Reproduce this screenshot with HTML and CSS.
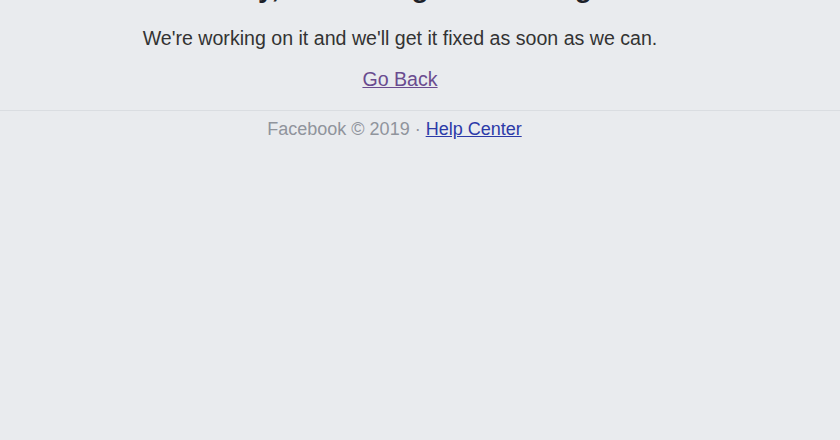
FILE: index.html
```html
<!DOCTYPE html>
<html lang="en">
<head>
    <meta charset="UTF-8">
    <title>Error</title>
    <link rel="stylesheet" href="styles.css">
</head>
<body>

    <!-- Error message -->
    <div class="error-box">
        <h1>Sorry, something went wrong.</h1>
        <p class="error-text">We're working on it and we'll get it fixed as soon as we can.</p>
        <a class="go-back" href="#">Go Back</a>
    </div>

    <!-- Footer -->
    <div class="footer">
        <span class="copyright">Facebook &copy; 2019 &middot; </span><a class="help-link" href="#">Help Center</a>
    </div>

</body>
</html>
```

FILE: styles.css
```css
body {
    font-family: "Liberation Sans", Arial, sans-serif;
    background-color: #e9ebee;
    margin: 0;
    padding: 0;
}

.error-box {
    margin-top: -28px;
    padding-right: 40px;
    padding-bottom: 19px;
    text-align: center;
    border-bottom: 1px solid #dadde1;
}

h1 {
    font-size: 28px;
    font-weight: bold;
    color: #1d2129;
    margin: 0 0 22px;
    line-height: 32px;
}

.error-text {
    font-size: 19.6px;
    color: #333;
    margin: 0 0 17px;
    line-height: 24px;
}

.go-back {
    font-size: 19.6px;
    color: #6a4b8f;
    line-height: 24px;
}

.footer {
    padding-right: 51px;
    padding-top: 8px;
    text-align: center;
    font-size: 18px;
}

.copyright {
    color: #90949c;
}

.help-link {
    color: #2c3aa8;
}
```
